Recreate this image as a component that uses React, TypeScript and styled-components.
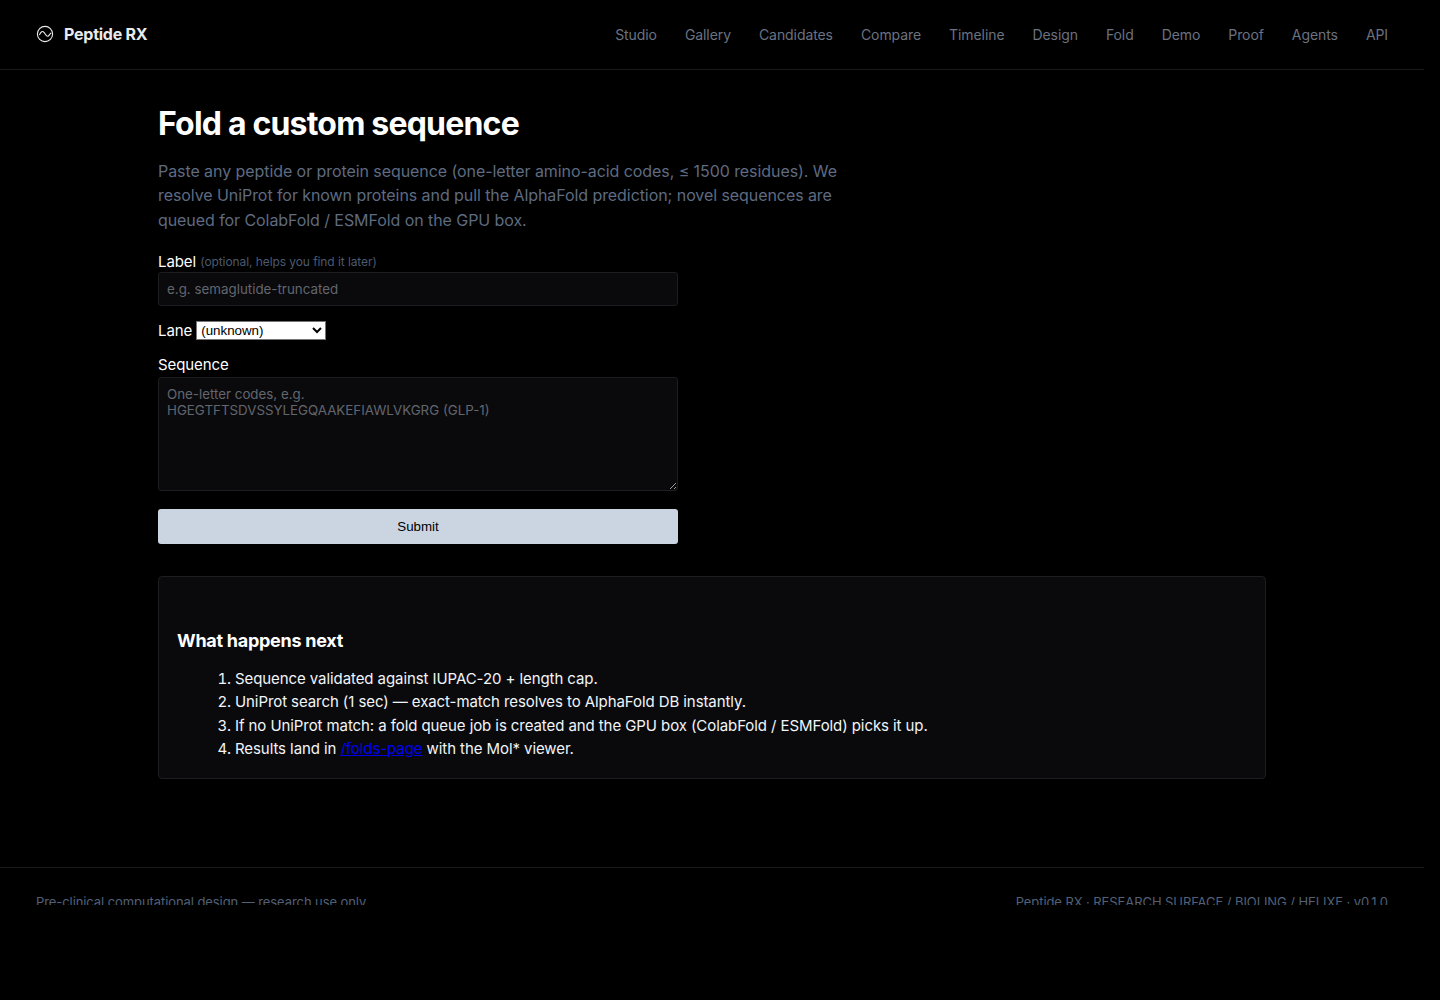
import React from 'react';
import styled, { createGlobalStyle } from 'styled-components';

const navItems = ['Studio', 'Gallery', 'Candidates', 'Compare', 'Timeline', 'Design', 'Fold', 'Demo', 'Proof', 'Agents', 'API'];

const GlobalStyle = createGlobalStyle`
  html, body {
    margin: 0;
    background: #000;
  }
  body {
    font-family: Inter, "Liberation Sans", sans-serif;
    letter-spacing: -0.005em;
    color: #fff;
  }
`;

const Page = styled.div`
  width: 1424px;
  height: 1000px;
  overflow: hidden;
`;

const Header = styled.header`
  height: 69px;
  padding: 0 36px;
  display: flex;
  align-items: center;
  justify-content: space-between;
  border-bottom: 1px solid #1a1a1d;
`;

const Brand = styled.div`
  display: flex;
  align-items: center;
  gap: 10px;
  margin-top: -2px;
  font-size: 16px;
  font-weight: 700;
  letter-spacing: -0.015em;
  color: #e8eaed;
`;

const Nav = styled.nav`
  display: flex;
  gap: 28px;
`;

const NavLink = styled.a`
  font-size: 14px;
  line-height: 20px;
  padding-top: 1px;
  color: #6b7280;
`;

const Main = styled.main`
  width: 1108px;
  height: 797px;
  margin: 0 auto;
  padding-top: 32px;
  box-sizing: border-box;
`;

const Title = styled.h1`
  margin: 0 0 12.7px;
  font-size: 32px;
  line-height: 44px;
  font-weight: 700;
  letter-spacing: -0.025em;
  color: #fff;
`;

const Lead = styled.p`
  margin: 0 0 20.3px;
  width: 700px;
  font-size: 16px;
  line-height: 24.5px;
  letter-spacing: -0.0045em;
  color: #5e6b80;
`;

const Form = styled.form`
  width: 520px;
`;

const FieldLabel = styled.label`
  display: block;
  padding: 1px 0;
  font-size: 15px;
  line-height: 18px;
  color: #fff;
`;

const Hint = styled.span`
  font-size: 12px;
  vertical-align: 1px;
  line-height: 1;
  color: #4b5a70;
`;

const TextInput = styled.input`
  display: block;
  width: 100%;
  height: 34px;
  margin: 0 0 14px;
  padding: 0 8px;
  box-sizing: border-box;
  background: #0a0a0d;
  border: 1px solid #1c1d20;
  border-radius: 3px;
  font: 13.33px Inter, sans-serif;
  letter-spacing: 0.001em;
  color: #fff;
  &::placeholder {
    color: #62666d;
  }
`;

const LaneRow = styled.div`
  display: flex;
  align-items: center;
  gap: 4px;
  height: 20px;
  margin-bottom: 15px;
  font-size: 15px;
`;

const LaneSelect = styled.select`
  width: 130px;
  height: 19px;
  font: 13.33px "Liberation Sans", Arial, sans-serif;
  background: #fff;
  color: #000;
`;

const SequenceBox = styled.textarea`
  display: block;
  width: 100%;
  height: 114px;
  margin: 2px 0 18px;
  padding: 8px;
  box-sizing: border-box;
  background: #0a0a0d;
  border: 1px solid #1c1d20;
  border-radius: 3px;
  font: 13.33px/16px Inter, sans-serif;
  color: #fff;
  &::placeholder {
    color: #62666d;
  }
`;

const SubmitButton = styled.button`
  display: block;
  width: 100%;
  height: 35px;
  border: 0;
  border-radius: 3px;
  background: #cbd5e1;
  font: 400 13.33px "Liberation Sans", Arial, sans-serif;
  color: #000;
`;

const Card = styled.section`
  margin-top: 32px;
  height: 203px;
  box-sizing: border-box;
  padding: 18px;
  background: #0a0a0d;
  border: 1px solid #1c1d20;
  border-radius: 4px;
`;

const CardTitle = styled.h3`
  margin: 34px 0 13.6px;
  font-size: 18px;
  line-height: 24px;
  font-weight: 700;
  letter-spacing: -0.015em;
  color: #fff;
`;

const Steps = styled.ol`
  margin: 0;
  padding-left: 58px;
  font-size: 15px;
  line-height: 23.3px;
  color: #f1f5f9;
`;

const InlineLink = styled.a`
  color: #0000ee;
  text-decoration: underline;
`;

const Footer = styled.footer`
  height: 38px;
  padding: 26px 36px 0;
  box-sizing: border-box;
  overflow: hidden;
  display: flex;
  justify-content: space-between;
  align-items: flex-start;
  border-top: 1px solid #1a1a1d;
  font-size: 13px;
  line-height: 16px;
  color: #526178;
`;

function WaveLogo() {
  return (
    <svg width="18" height="18" viewBox="0 0 18 18" fill="none" stroke="#e8eaed" strokeWidth="1.1" strokeLinecap="round">
      <circle cx="9" cy="9" r="7.6" />
      <path d="M3.6 9.6C5 6.8 6.4 5.6 8 7.4S10.4 12 12 11.2 13.8 8.8 14.8 8.2" />
    </svg>
  );
}

export default function App() {
  return (
    <Page>
      <GlobalStyle />
      <Header>
        <Brand>
          <WaveLogo />
          Peptide RX
        </Brand>
        <Nav>
          {navItems.map((item) => (
            <NavLink key={item}>{item}</NavLink>
          ))}
        </Nav>
      </Header>

      <Main>
        <Title>Fold a custom sequence</Title>
        <Lead>
          Paste any peptide or protein sequence (one-letter amino-acid codes, ≤ 1500 residues). We
          resolve UniProt for known proteins and pull the AlphaFold prediction; novel sequences are
          queued for ColabFold / ESMFold on the GPU box.
        </Lead>

        <Form onSubmit={(e) => e.preventDefault()}>
          <FieldLabel>
            Label <Hint>(optional, helps you find it later)</Hint>
          </FieldLabel>
          <TextInput placeholder="e.g. semaglutide-truncated" />

          <LaneRow>
            Lane
            <LaneSelect defaultValue="unknown">
              <option value="unknown">(unknown)</option>
            </LaneSelect>
          </LaneRow>

          <FieldLabel>Sequence</FieldLabel>
          <SequenceBox placeholder={'One-letter codes, e.g.\nHGEGTFTSDVSSYLEGQAAKEFIAWLVKGRG (GLP-1)'} />

          <SubmitButton type="submit">Submit</SubmitButton>
        </Form>

        <Card>
          <CardTitle>What happens next</CardTitle>
          <Steps>
            <li>Sequence validated against IUPAC-20 + length cap.</li>
            <li>UniProt search (1 sec) — exact-match resolves to AlphaFold DB instantly.</li>
            <li>If no UniProt match: a fold queue job is created and the GPU box (ColabFold / ESMFold) picks it up.</li>
            <li>
              Results land in <InlineLink href="#">/folds-page</InlineLink> with the Mol* viewer.
            </li>
          </Steps>
        </Card>
      </Main>

      <Footer>
        <span>Pre-clinical computational design — research use only</span>
        <span>Peptide RX · RESEARCH SURFACE / BIOLING / HELIXE · v0.1.0</span>
      </Footer>
    </Page>
  );
}
